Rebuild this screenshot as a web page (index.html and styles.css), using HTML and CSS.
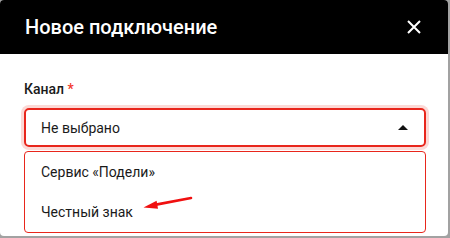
FILE: index.html
```html
<!doctype html>
<html lang="ru">
	<head>
		<meta charset="UTF-8">
		<title>Новое подключение</title>
		<link rel="stylesheet" href="styles.css">
	</head>
	<body>
		<div class="modal">
			<div class="modal-head">
				<span class="modal-title">Новое подключение</span>
				<svg class="modal-close" width="14" height="14" viewBox="0 0 14 14">
					<path d="M1 1L13 13M13 1L1 13" stroke="#fff" stroke-width="2" fill="none"/>
				</svg>
			</div>
			<div class="modal-body">
				<div class="field-label">Канал <span class="req">*</span></div>
				<div class="select">
					<span>Не выбрано</span>
					<svg width="10" height="5" viewBox="0 0 10 5">
						<polygon points="0,5 5,0 10,5" fill="#111"/>
					</svg>
				</div>
				<ul class="options">
					<li>Сервис «Подели»</li>
					<li>Честный знак</li>
				</ul>
				<svg class="pointer" width="60" height="20" viewBox="0 0 60 20">
					<path d="M57 2L22 8.6" stroke="#f01010" stroke-width="2.6" stroke-linecap="round" fill="none"/>
					<polygon points="9.5,11.5 24,12.8 22.6,4.8" fill="#f01010"/>
				</svg>
			</div>
		</div>
	</body>
</html>
```
FILE: styles.css
```css
html,body{
	margin: 0;
	padding: 0;
}
body{
	background-color: #a2a2a2;
	font-family: Roboto, "Noto Sans", sans-serif;
	color: #1a1a1a;
}
.modal{
	width: 448px;
	height: 236px;
	background-color: #fff;
	border-radius: 4px;
	overflow: hidden;
}
.modal-head{
	height: 54px;
	padding: 0 27px 0 25px;
	background-color: #000;
	display: flex;
	align-items: center;
	justify-content: space-between;
}
.modal-title{
	color: #fff;
	font-size: 20px;
	font-weight: 500;
}
.modal-body{
	position: relative;
	padding: 25px 22px 0 24px;
}
.field-label{
	font-size: 14px;
	font-weight: 500;
	line-height: 20px;
	margin-bottom: 9px;
}
.req{
	color: #f2372c;
}
.select{
	height: 35px;
	padding: 0 16px 0 15px;
	border: 2px solid #e8261c;
	border-radius: 5px;
	box-shadow: 0 0 0 3px #fcd9d6;
	display: flex;
	align-items: center;
	justify-content: space-between;
	font-size: 14px;
}
.options{
	list-style: none;
	margin: 4px 0 0 0;
	padding: 0;
	border: 1px solid #e8261c;
	border-radius: 4px;
}
.options li{
	height: 40px;
	line-height: 40px;
	padding-left: 16px;
	font-size: 14px;
}
.pointer{
	position: absolute;
	left: 134px;
	top: 142px;
}
```
